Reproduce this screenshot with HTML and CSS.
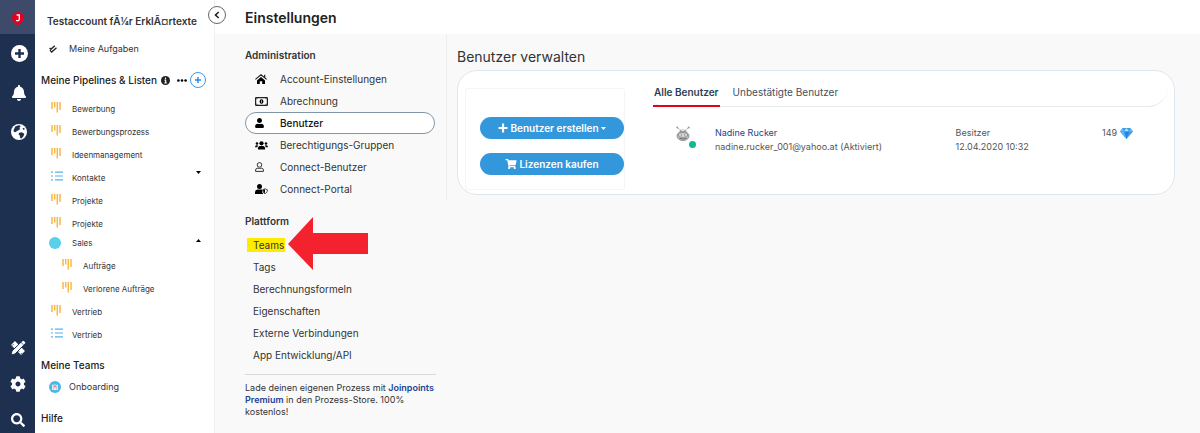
FILE: index.html
```html
<!DOCTYPE html>
<html lang="de">
<head>
<meta charset="utf-8">
<meta name="viewport" content="width=device-width, initial-scale=1">
<title>Einstellungen</title>
<link rel="stylesheet" href="styles.css">
</head>
<body>
<svg class="sprite" aria-hidden="true">
  <symbol id="pipeline" viewBox="0 0 10 12"><path d="M1 1v7M3.700 1v5.500M6.300 1v10.500M9 1v8" fill="none" stroke="#f9b845" stroke-width="1.500"/></symbol>
  <symbol id="list" viewBox="0 0 12 10"><path d="M0 1.200h2M4 1.200h8M0 5h2M4 5h8M0 8.800h2M4 8.800h8" fill="none" stroke="#55b4ee" stroke-width="1.200"/></symbol>
  <symbol id="user" viewBox="0 0 448 512"><path d="M224 256c70.700 0 128-57.300 128-128S294.700 0 224 0 96 57.300 96 128s57.300 128 128 128zm89.600 32h-16.700c-22.200 10.200-46.900 16-72.900 16s-50.600-5.800-72.900-16h-16.700C60.200 288 0 348.200 0 422.400V464c0 26.500 21.500 48 48 48h352c26.500 0 48-21.500 48-48v-41.600c0-74.200-60.200-134.400-134.400-134.400z"/></symbol>
</svg>
<div class="app">
  <nav class="rail" aria-label="Hauptnavigation">
    <a class="rail-logo" href="#" aria-label="Startseite">
      <svg width="12" height="14" viewBox="0 0 12 14"><path d="M6 0a6 6 0 0 1 6 6c0 3.200-3 4.800-6 8C3 10.800 0 9.200 0 6a6 6 0 0 1 6-6z" fill="#e3001f"/><path d="M4.600 3h2.700v4.300c0 1.400-1.900 2-3.200.9" fill="none" stroke="#fff" stroke-width="1.300"/></svg>
    </a>
    <div class="rail-group">
      <button aria-label="Neu"><svg width="17" height="17" viewBox="0 0 17 17"><circle cx="8.500" cy="8.500" r="8.500" fill="#fff"/><path d="M8.500 4v9M4 8.500h9" stroke="#1e3050" stroke-width="2.400"/></svg></button>
      <button aria-label="Benachrichtigungen"><svg width="14" height="16" viewBox="0 0 448 512"><path fill="#fff" d="M224 512c35.300 0 64-28.700 64-64H160c0 35.300 28.700 64 64 64zm215.400-149.700c-19.300-20.800-55.500-52-55.500-154.300 0-77.700-54.500-139.900-127.900-155.200V32c0-17.700-14.300-32-32-32s-32 14.300-32 32v20.800C118.600 68.100 64.100 130.300 64.100 208c0 102.300-36.200 133.500-55.500 154.300-6 6.400-8.600 14.200-8.600 21.700.1 16.400 13 32 32.100 32h383.800c19.100 0 32-15.600 32.100-32 .1-7.500-2.600-15.300-8.500-21.700z"/></svg></button>
      <button aria-label="Netzwerk"><svg width="16" height="16" viewBox="0 0 16 16"><circle cx="8" cy="8" r="8" fill="#fff"/><path d="M4.200 2.400L8.300 1l1.300 1.400-1.300 1.500 1 1-2 1.700-1.700.3-.5 1.300-2.300-.5-.3-1.500zM8.200 8.700l2.500-.5 2.600 1.500-.7 2.200-2 2.600-1.400-.4-.4-2.500-1.300-1.300zM11.600 4.200l1.500-.4.7 1.500-1.400.6z" fill="#1e3050"/></svg></button>
    </div>
    <div class="rail-group rail-bottom">
      <button aria-label="Gestalten"><svg width="16" height="16" viewBox="0 0 16 16"><path d="M3 3l10 10" stroke="#fff" stroke-width="5.500"/><path d="M2 5.700l1.500-1.500M4.600 8.300l1-1M8.400 12.100l1-1M10.800 14l1.100-1.100" stroke="#1e3050" stroke-width=".8"/><path d="M1 15L2 11 12.300.9Q13.300 0 14.300.9L15.200 1.800Q16 2.700 15.200 3.700L5 14z" fill="#fff" stroke="#1e3050" stroke-width="1"/><path d="M11.200 2.500l2.400 2.400" stroke="#1e3050" stroke-width=".8"/></svg></button>
      <button aria-label="Einstellungen"><svg width="16" height="16" viewBox="0 0 512 512"><path fill="#fff" d="M487.400 315.700l-42.600-24.600c4.300-23.200 4.300-47 0-70.200l42.600-24.600c4.900-2.800 7.100-8.600 5.500-14-11.100-35.600-30-67.800-54.700-94.600-3.800-4.100-10-5.100-14.800-2.300L380.800 110c-17.900-15.400-38.500-27.300-60.800-35.100V25.800c0-5.600-3.900-10.500-9.400-11.700-36.700-8.200-74.300-7.800-109.200 0-5.500 1.200-9.400 6.100-9.400 11.700V75c-22.200 7.900-42.800 19.800-60.800 35.100L88.700 85.500c-4.900-2.800-11-1.900-14.800 2.300-24.700 26.700-43.600 58.900-54.700 94.600-1.700 5.400.6 11.200 5.500 14L67.300 221c-4.300 23.200-4.300 47 0 70.200l-42.600 24.600c-4.900 2.800-7.100 8.600-5.500 14 11.100 35.600 30 67.800 54.700 94.600 3.800 4.100 10 5.100 14.800 2.300l42.600-24.600c17.900 15.400 38.500 27.300 60.800 35.100v49.200c0 5.600 3.900 10.500 9.400 11.700 36.700 8.200 74.300 7.800 109.200 0 5.500-1.200 9.400-6.100 9.400-11.700v-49.200c22.200-7.900 42.800-19.800 60.800-35.100l42.600 24.600c4.900 2.800 11 1.900 14.800-2.300 24.700-26.700 43.600-58.900 54.700-94.600 1.500-5.500-.7-11.300-5.600-14.100zM256 336c-44.100 0-80-35.900-80-80s35.900-80 80-80 80 35.900 80 80-35.900 80-80 80z"/></svg></button>
      <button aria-label="Suche"><svg width="14" height="14" viewBox="0 0 512 512"><path fill="#fff" d="M505 442.700L405.300 343c-4.500-4.500-10.600-7-17-7H372c27.600-35.300 44-79.700 44-128C416 93.100 322.900 0 208 0S0 93.100 0 208s93.100 208 208 208c48.300 0 92.700-16.400 128-44v16.300c0 6.400 2.500 12.500 7 17l99.700 99.700c9.400 9.400 24.600 9.400 33.900 0l28.300-28.300c9.400-9.400 9.400-24.600.1-34zM208 336c-70.700 0-128-57.200-128-128 0-70.700 57.200-128 128-128 70.700 0 128 57.200 128 128 0 70.700-57.200 128-128 128z"/></svg></button>
    </div>
  </nav>

  <aside class="sidebar">
    <button class="collapse" aria-label="Seitenleiste einklappen"><svg width="6" height="8" viewBox="0 0 6 8"><path d="M4.700 1L1.500 4l3.200 3" fill="none" stroke="#222" stroke-width="1.600"/></svg></button>
    <div class="account">Testaccount fÃ¼r ErklÃ¤rtexte</div>
    <a class="side-link" href="#"><span class="side-icon"><svg width="8" height="8" viewBox="0 0 8 8"><path d="M.6 3l1.300 1.300L5.800.7M1 5.300l1.700 1.800L7.500 2.700" fill="none" stroke="#222" stroke-width="1.300"/></svg></span>Meine Aufgaben</a>
    <div class="side-head">
      <h2>Meine Pipelines &amp; Listen</h2>
      <svg width="9" height="9" viewBox="0 0 9 9"><circle cx="4.500" cy="4.500" r="4.500" fill="#222"/><path d="M4.500 1.500v1.400M3.500 4.100h1.200v2.700M3.400 6.900h2.300" stroke="#fff" stroke-width="1.100" fill="none"/></svg>
      <button class="more" aria-label="Mehr"><svg width="10" height="3" viewBox="0 0 10 3"><circle cx="1.400" cy="1.500" r="1.300"/><circle cx="5" cy="1.500" r="1.300"/><circle cx="8.600" cy="1.500" r="1.300"/></svg></button>
      <button class="add" aria-label="Pipeline hinzufügen"><svg width="8" height="8" viewBox="0 0 8 8"><path d="M4 1v6M1 4h6" stroke="#2488f0" stroke-width="1.400"/></svg></button>
    </div>
    <ul class="tree">
      <li><a href="#"><span class="tree-icon"><svg width="10" height="12"><use href="#pipeline"/></svg></span>Bewerbung</a></li>
      <li><a href="#"><span class="tree-icon"><svg width="10" height="12"><use href="#pipeline"/></svg></span>Bewerbungsprozess</a></li>
      <li><a href="#"><span class="tree-icon"><svg width="10" height="12"><use href="#pipeline"/></svg></span>Ideenmanagement</a></li>
      <li><a href="#"><span class="tree-icon"><svg width="12" height="10"><use href="#list"/></svg></span>Kontakte<svg class="caret" width="5" height="3" viewBox="0 0 5 3"><path d="M0 0h5L2.500 3z"/></svg></a></li>
      <li><a href="#"><span class="tree-icon"><svg width="10" height="12"><use href="#pipeline"/></svg></span>Projekte</a></li>
      <li><a href="#"><span class="tree-icon"><svg width="10" height="12"><use href="#pipeline"/></svg></span>Projekte</a></li>
      <li class="folder"><a href="#"><span class="dot"></span>Sales<svg class="caret" width="5" height="3" viewBox="0 0 5 3"><path d="M0 3h5L2.500 0z"/></svg></a>
        <ul>
          <li><a href="#"><span class="tree-icon"><svg width="10" height="12"><use href="#pipeline"/></svg></span>Aufträge</a></li>
          <li><a href="#"><span class="tree-icon"><svg width="10" height="12"><use href="#pipeline"/></svg></span>Verlorene Aufträge</a></li>
        </ul>
      </li>
      <li><a href="#"><span class="tree-icon"><svg width="10" height="12"><use href="#pipeline"/></svg></span>Vertrieb</a></li>
      <li><a href="#"><span class="tree-icon"><svg width="12" height="10"><use href="#list"/></svg></span>Vertrieb</a></li>
    </ul>
    <h2 class="side-title">Meine Teams</h2>
    <a class="side-link" href="#"><span class="side-icon"><svg width="12" height="12" viewBox="0 0 12 12"><circle cx="6" cy="6" r="6" fill="#4bb9e8"/><path d="M3 3.500l2 .4 1-.8 1 .8 2-.4V9H3z" fill="#f5e9ef"/><path d="M4.300 4.500v4M7.700 4.500v4" stroke="#c9a8c4" stroke-width=".8"/><path d="M6 4.200v2" stroke="#e5405a" stroke-width="1.200"/></svg></span>Onboarding</a>
    <h2 class="side-title">Hilfe</h2>
  </aside>

  <div class="page">
    <header class="topbar"><h1>Einstellungen</h1></header>
    <div class="content">
      <nav class="settings" aria-label="Einstellungen">
        <div class="admin">
          <h2>Administration</h2>
          <ul>
            <li><a href="#"><span class="nav-icon"><svg width="12" height="10" viewBox="0 0 12 10"><path d="M.4 5.400L6 .8l5.600 4.600M9.700.8v3" fill="none" stroke="#222" stroke-width="1.200"/><path d="M6 3.100l4 3.300V10H7.200V7.300H4.800V10H2V6.400z"/></svg></span>Account-Einstellungen</a></li>
            <li><a href="#"><span class="nav-icon"><svg width="13" height="9" viewBox="0 0 13 9"><rect x=".6" y=".6" width="11.800" height="7.800" rx=".6" fill="none" stroke="#222" stroke-width="1.200"/><path d="M1 2.500L2.500 1M10.500 1L12 2.500M1 6.500L2.500 8M12 6.500L10.500 8" fill="none" stroke="#222" stroke-width=".8"/><ellipse cx="6.500" cy="4.500" rx="1.900" ry="2.200"/><path d="M6.500 3.300v2.400" stroke="#fff" stroke-width=".7"/></svg></span>Abrechnung</a></li>
            <li><a class="active" href="#" aria-current="page"><span class="nav-icon"><svg width="9" height="10"><use href="#user"/></svg></span>Benutzer</a></li>
            <li><a href="#"><span class="nav-icon"><svg width="13" height="9" viewBox="0 0 13 9"><circle cx="2" cy="2.500" r="1.300"/><circle cx="11" cy="2.500" r="1.300"/><circle cx="6.500" cy="2.300" r="2.100"/><path d="M0 6.300Q0 4.300 1.700 4.300H3Q2.700 5.500 2.300 6.300zM13 6.300Q13 4.300 11.300 4.300H10Q10.300 5.500 10.700 6.300zM2.900 8.500Q2.700 5 5 5H8Q10.300 5 10.100 8.500z"/></svg></span>Berechtigungs-Gruppen</a></li>
            <li><a href="#"><span class="nav-icon"><svg width="9" height="10" viewBox="0 0 9 10"><circle cx="4.500" cy="2.900" r="2.300" fill="none" stroke="#333"/><path d="M.6 9.400V8Q.7 6.200 2.800 6.100Q4.500 6.900 6.200 6.100Q8.300 6.200 8.400 8v1.400z" fill="none" stroke="#333"/></svg></span>Connect-Benutzer</a></li>
            <li><a href="#"><span class="nav-icon"><svg width="13" height="10" viewBox="0 0 13 10"><circle cx="4.500" cy="2.500" r="2.500"/><path d="M0 10V8Q.1 5.700 2.600 5.600H7V8L8.300 10z"/><path d="M10 4.800l2.400 1c0 2-.7 3-2.400 3.900C8.300 8.800 7.600 7.800 7.600 5.800z" stroke="#222" stroke-width=".8" fill="#fff"/><path d="M10 5.200v4c-1.300-.8-1.900-1.500-2-3.200z"/></svg></span>Connect-Portal</a></li>
          </ul>
        </div>
        <div class="platform">
          <h2>Plattform</h2>
          <ul>
            <li class="pointed"><a href="#"><mark>Teams</mark></a><svg class="arrow" width="80" height="53" viewBox="0 0 80 53" aria-hidden="true"><path d="M0 27L25 0v16h55v21H25v16z" fill="#f4212e"/></svg></li>
            <li><a href="#">Tags</a></li>
            <li><a href="#">Berechnungsformeln</a></li>
            <li><a href="#">Eigenschaften</a></li>
            <li><a href="#">Externe Verbindungen</a></li>
            <li><a href="#">App Entwicklung/API</a></li>
          </ul>
          <p class="promo">Lade deinen eigenen Prozess mit <a href="#">Joinpoints Premium</a> in den Prozess-Store. 100% kostenlos!</p>
        </div>
      </nav>

      <main class="main">
        <h2>Benutzer verwalten</h2>
        <section class="card">
          <div class="actions">
            <button><svg width="10" height="10" viewBox="0 0 10 10"><path d="M5 .5v9M.5 5h9" stroke="#fff" stroke-width="2.200"/></svg>Benutzer erstellen<svg class="drop" width="5" height="3" viewBox="0 0 5 3"><path d="M0 0h5L2.500 3z"/></svg></button>
            <button><svg width="12" height="10" viewBox="0 0 576 512"><path d="M528.100 301.300l47.300-208C578.800 78.300 567.400 64 552 64H159.200l-9.200-44.800C147.800 8 137.900 0 126.500 0H24C10.700 0 0 10.700 0 24v16c0 13.300 10.700 24 24 24h69.900l70.200 343.400C147.300 417.100 136 435.200 136 456c0 30.900 25.100 56 56 56s56-25.100 56-56c0-15.700-6.400-29.800-16.800-40h209.600C430.400 426.200 424 440.300 424 456c0 30.900 25.100 56 56 56s56-25.100 56-56c0-22.200-12.900-41.300-31.600-50.400l5.500-24.300c3.400-15-8-29.300-23.400-29.300H218.100l-6.500-32h293.100c11.200 0 20.900-7.800 23.400-18.700z"/></svg>Lizenzen kaufen</button>
          </div>
          <div class="users">
            <div class="tabs" role="tablist">
              <button class="tab selected" role="tab" aria-selected="true">Alle Benutzer</button>
              <button class="tab" role="tab" aria-selected="false">Unbestätigte Benutzer</button>
            </div>
            <table>
              <colgroup><col class="col-avatar"><col class="col-name"><col class="col-role"><col></colgroup>
              <tbody>
                <tr>
                  <td class="avatar-cell"><span class="avatar"><svg width="14" height="16" viewBox="0 0 14 16"><path d="M1.500 1.500l2 2M12.500 1.500l-2 2" stroke="#aaa"/><circle cx="1.300" cy="1.500" r="1" fill="#999"/><circle cx="12.700" cy="1.500" r="1" fill="#999"/><path d="M2.500 7Q2.500 2.800 7 2.800T11.500 7z" fill="#e2e2e2"/><circle cx="4.800" cy="5" r=".7" fill="#666"/><circle cx="9.200" cy="5" r=".7" fill="#666"/><ellipse cx="7" cy="10" rx="6" ry="4.600" fill="#bbb" stroke="#888" stroke-width=".8"/><ellipse cx="7" cy="9" rx="4.500" ry="2.300" fill="#ddd" stroke="#777" stroke-width=".7"/><path d="M4.800 9h1.300M7.900 9h1.300M3.500 12.300q3.500 1.600 7 0" stroke="#555" stroke-width=".8" fill="none"/></svg><span class="online"></span></span></td>
                  <td><a href="#">Nadine Rucker</a><br>nadine.rucker_001@yahoo.at (Aktiviert)</td>
                  <td>Besitzer<br>12.04.2020 10:32</td>
                  <td><span class="gems">149 <svg width="13" height="11" viewBox="0 0 13 11"><path d="M2.700 0h7.600L13 3.500 6.500 11 0 3.500z" fill="#3b9bea"/><path d="M2.700 0L4 3.500H0zM10.300 0L9 3.500h4z" fill="#67b9f3"/><path d="M4 3.500L6.500 0 9 3.500z" fill="#b2e2ff"/><path d="M4 3.500h5L6.500 11z" fill="#2385df"/><path d="M0 3.500h4L6.500 11z" fill="#58b3f4"/></svg></span></td>
                </tr>
              </tbody>
            </table>
          </div>
        </section>
      </main>
    </div>
  </div>
</div>
</body>
</html>
```

FILE: styles.css
```css
* { box-sizing: border-box; }
body {
  margin: 0;
  font-family: Inter, "Open Sans", sans-serif;
  font-size: 10px;
  line-height: 14px;
  color: #333;
  background: #f9f9fa;
}
h1, h2, p, ul { margin: 0; padding: 0; }
ul { list-style: none; }
a { color: inherit; text-decoration: none; }
button { font: inherit; color: inherit; background: none; border: 0; padding: 0; cursor: pointer; }
svg { display: block; flex: none; }
.sprite { position: absolute; width: 0; height: 0; }
.app { display: flex; min-height: 100vh; }

.rail { width: 35px; flex: none; display: flex; flex-direction: column; background: #1e3050; }
.rail-logo { height: 34px; display: grid; place-items: center; padding-top: 4px; background: #3d4a69; }
.rail-group { display: flex; flex-direction: column; align-items: center; gap: 22px; padding: 11px 0 0 3px; }
.rail-group button { display: grid; place-items: center; width: 17px; height: 17px; }
.rail-bottom { gap: 19px; margin-top: auto; padding: 0 0 5px; }

.sidebar { position: relative; width: 180px; flex: none; background: #fff; border-right: 1px solid #f1f1f3; padding: 12px 6px 6px; }
.collapse { position: absolute; top: 6px; right: -12px; width: 18px; height: 18px; display: grid; place-items: center; background: #fff; border: 1px solid #666; border-radius: 50%; }
.account { padding-left: 6px; line-height: 18px; font-size: 10px; font-weight: 600; white-space: nowrap; color: #333; }
.side-link { display: flex; align-items: center; height: 22px; font-size: 9px; }
.account + .side-link { margin-top: 8px; }
.side-icon { width: 28px; padding-left: 8px; }
.side-head { display: flex; align-items: center; height: 18px; margin-top: 11px; }
.side-head h2, .side-title { font-size: 10px; font-weight: 500; line-height: 18px; color: #222; }
.side-head h2 { margin-right: 4px; white-space: nowrap; }
.more { margin: 0 3px 0 7px; }
.add { width: 16px; height: 16px; display: grid; place-items: center; border: 1px solid #3c99f3; border-radius: 50%; }
.tree { padding-top: 8px; }
.tree a { display: flex; align-items: center; height: 23px; padding-left: 10px; font-size: 8px; }
.tree-icon { width: 21px; }
.tree-icon svg { margin-bottom: 4px; }
.caret { margin-left: auto; margin-right: 7px; margin-bottom: 10px; }
.folder > a { height: 16px; padding-left: 8px; }
.folder .caret { margin-bottom: 6px; }
.folder > ul { padding: 3px 0 0 11px; }
.dot { width: 12px; height: 12px; margin-right: 11px; border-radius: 50%; background: #58d0ec; }
.side-title { margin-top: 10px; }
.side-title + .side-link { margin-top: 2px; }
.side-link + .side-title { margin-top: 11px; }

.page { flex: 1; min-width: 0; }
.topbar { height: 34px; padding: 9px 30px; background: #fff; }
h1 { font-size: 14px; line-height: 18px; font-weight: 600; color: #222; }
.content { display: flex; }
.settings { width: 232px; flex: none; }
.settings h2 { font-size: 10px; line-height: 18px; font-weight: 600; color: #333; }
.admin { padding: 12px 11px 0 30px; border-right: 1px solid #eeeef0; }
.admin ul { padding-top: 4px; }
.admin a { display: flex; align-items: center; height: 22px; padding-left: 9px; border: 1px solid transparent; border-radius: 11px; }
.admin .active { background: #fff; border-color: #8196a8; color: #111; font-weight: 500; }
.nav-icon { width: 25px; display: flex; color: #222; }
.platform { padding: 12px 11px 0 30px; }
.platform ul { padding: 4px 0 8px; border-bottom: 1px solid #d9d9dc; }
.platform li { height: 22px; line-height: 22px; padding-left: 8px; }
.pointed { position: relative; }
mark { padding: 1px 1px 1px 6px; margin-left: -6px; background: #ffeb00; color: #333; }
.arrow { position: absolute; left: 43px; top: -17px; }
.promo { margin-right: -5px; padding-top: 7px; font-size: 9px; line-height: 12px; }
.promo a { color: #22438f; font-weight: 600; }

.main { flex: 1; min-width: 0; padding: 13px 25px 20px 10px; }
.main h2 { font-size: 14px; line-height: 20px; font-weight: 400; color: #333; }
.card { display: flex; gap: 20px; margin-top: 3px; padding: 17px 6px 4px 7px; background: #fff; border: 1px solid #dfe7ee; border-radius: 20px; }
.actions { width: 160px; flex: none; display: flex; flex-direction: column; gap: 14px; padding: 28px 0 14px 14px; border: 1px solid #f4f5f7; border-radius: 3px; }
.actions button { display: flex; align-items: center; justify-content: center; gap: 2px; height: 22px; border-radius: 11px; background: #3397dc; color: #fff; fill: #fff; font-weight: 600; }
.users { flex: 1; min-width: 0; margin-top: -9px; }
.tabs { display: flex; gap: 12px; height: 28px; padding-left: 8px; border-bottom: 1px solid #e4e9ee; border-radius: 0 0 20px 20px; }
.tab { height: 28px; padding: 0 1px; font-size: 10px; border-bottom: 2px solid transparent; color: #44505e; }
.selected { font-weight: 600; color: #2c3e55; border-color: #e2001a; }
table { width: 100%; margin-top: 19px; table-layout: fixed; border-collapse: collapse; font-size: 9px; color: #555; }
td { padding: 0; vertical-align: top; white-space: nowrap; }
td a { color: #22438f; }
.col-avatar { width: 70px; }
.col-name { width: 46%; }
.col-role { width: 28%; }
.avatar-cell { padding-left: 31px; }
.avatar { position: relative; display: block; width: 14px; }
.online { position: absolute; left: 13px; top: 15px; width: 7px; height: 7px; border-radius: 50%; background: #12b894; }
.gems { display: flex; align-items: center; gap: 3px; }
```
